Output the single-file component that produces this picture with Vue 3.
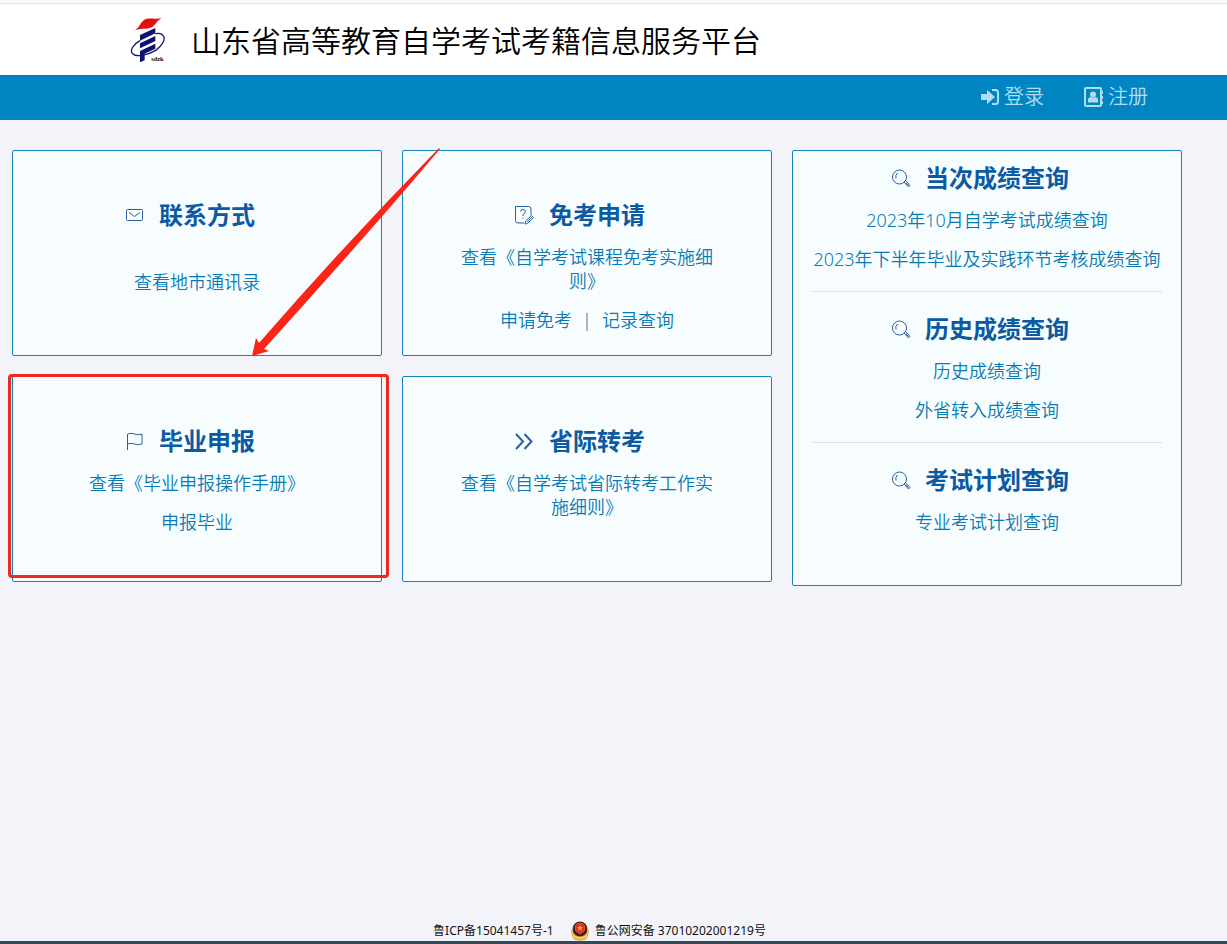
<script setup>
const cards = [
  { title: '联系方式', icon: 'mail', spaced: true, rows: [['查看地市通讯录']] },
  { title: '免考申请', icon: 'exam', rows: [['查看《自学考试课程免考实施细则》'], ['申请免考', '记录查询']] },
  { title: '毕业申报', icon: 'flag', marked: true, rows: [['查看《毕业申报操作手册》'], ['申报毕业']] },
  { title: '省际转考', icon: 'forward', rows: [['查看《自学考试省际转考工作实施细则》']] }
]
const queries = [
  { title: '当次成绩查询', links: ['2023年10月自学考试成绩查询', '2023年下半年毕业及实践环节考核成绩查询'] },
  { title: '历史成绩查询', links: ['历史成绩查询', '外省转入成绩查询'] },
  { title: '考试计划查询', links: ['专业考试计划查询'] }
]
</script>

<template>
  <div class="page">
    <header class="brand">
      <svg class="logo" viewBox="60 48 108 138" role="img" aria-label="sdzk">
        <path fill="#e01010" d="M71 90C88 82 90 66 102 57C115 48 134 57 155 50C141 59 136 72 125 79C109 87 93 80 71 90Z" />
        <g fill="#12126e">
          <path d="M90 102L136 81V97L90 119Z" />
          <path d="M90 127L136 105V120L90 142Z" />
          <path d="M90 150L136 128V143L104 158V178L90 184Z" />
        </g>
        <path fill="none" stroke="#12126e" stroke-width="4" d="M90 119C70 130 59 148 67 157C77 170 112 163 137 148C158 134 168 113 159 103C155 97 147 96 136 98" />
        <text x="124" y="181" class="logo-text">sdzk</text>
      </svg>
      <h1>山东省高等教育自学考试考籍信息服务平台</h1>
    </header>

    <nav class="nav">
      <a href="#">
        <svg class="nav-icon" viewBox="0 0 20 20">
          <path fill="currentColor" d="M1 7h6V3l8 7-8 7v-4H1z" />
          <path fill="none" stroke="currentColor" stroke-width="2" d="M12 3h3.500Q18 3 18 5.500v9Q18 17 15.500 17H12" />
        </svg>登录</a>
      <a href="#">
        <svg class="nav-icon" viewBox="0 0 20 20">
          <rect x="1" y="1" width="16" height="18" rx="1" fill="none" stroke="currentColor" stroke-width="2" />
          <path fill="currentColor" d="M17 4h2v3h-2zM17 9h2v3h-2zM17 14h2v3h-2z" />
          <circle cx="9" cy="7.500" r="3" fill="currentColor" />
          <path fill="currentColor" d="M4 15.500V13q0-3 3-3 2 1.500 4 0 3 0 3 3v2.500z" />
        </svg>注册</a>
    </nav>

    <main class="content">
      <section v-for="card in cards" :key="card.title" class="card" :class="[card.icon, { spaced: card.spaced }]">
        <h2>
          <svg class="icon" viewBox="0 0 20 20">
            <g v-if="card.icon === 'mail'">
              <rect x="1.500" y="4.500" width="16" height="11" rx="1" />
              <path d="M4 7.500l5.500 4L15 7.500" />
            </g>
            <g v-else-if="card.icon === 'exam'">
              <path d="M9 18H3Q.5 18 .5 15.500V1.500h13Q16 1.500 16 4v6" />
              <path d="M5.500 6.500Q5.500 4.500 8 4.500T10.500 6.500Q10.500 8 9 8.500 8 9 8 11M8 12.500v1" />
              <path d="M10 19l.5-3 6-5.500 2 2-6 6zM12 17l5-5" />
            </g>
            <path v-else-if="card.icon === 'flag'" d="M2.500 19V3Q6 1.500 9.500 3T17 3v10Q13 14.500 9.500 13T2.500 13" />
            <path v-else class="thick" d="M1 3l7 7.500L1 18M9.500 3l7 7.500-7 7.500" />
          </svg>
          <span>{{ card.title }}</span>
        </h2>
        <p v-for="row in card.rows" :key="row[0]">
          <template v-for="(label, i) in row" :key="label"><span v-if="i" class="divider">|</span><a href="#">{{ label }}</a></template>
        </p>
        <span v-if="card.marked" class="mark"></span>
      </section>

      <aside class="queries">
        <section v-for="query in queries" :key="query.title">
          <h2>
            <svg class="icon" viewBox="0 0 20 20">
              <circle cx="8.500" cy="9" r="7" />
              <path d="M5 10.500Q4 7 6.500 5M13 14l1.500-1.500 4.500 5-1.500 1.500zM15 15l2.500 2.500" />
            </svg>
            <span>{{ query.title }}</span>
          </h2>
          <p v-for="label in query.links" :key="label"><a href="#">{{ label }}</a></p>
        </section>
      </aside>

      <svg class="arrow" viewBox="0 0 190 210" aria-hidden="true">
        <path fill="#fc2416" d="M187 0L188 1Q124 77 12 201L17 203 0 208 4 190 7 195Q94 95 187 0Z" />
      </svg>
    </main>

    <footer class="footer">
      <a href="#">鲁ICP备15041457号-1</a>
      <a href="#">
        <svg class="badge" viewBox="0 0 20 20">
          <path fill="#e9b44a" d="M1 8Q1 17 5 19q5 1.500 10 0 4-2 4-11l-4 5H5z" />
          <circle cx="10" cy="8" r="7.500" fill="#432018" />
          <path fill="#e52d1d" stroke="#d9902f" stroke-width=".5" d="M10 2Q15 2 15 7q0 4-5 6-5-2-5-6 0-5 5-5z" />
          <path fill="#f6a744" d="M10 4l1 2h2l-1.500 1.500.5 2-2-1-2 1 .5-2L7 6h2z" />
          <path fill="none" stroke="#fae0a0" d="M3 15q7 4 14 0" />
        </svg>鲁公网安备 37010202001219号</a>
    </footer>
  </div>
</template>

<style>
body {
  margin: 0;
}
</style>

<style scoped>
.page {
  box-sizing: border-box;
  min-height: 100vh;
  display: flex;
  flex-direction: column;
  background: #f3f4f9;
  border-bottom: 3px solid #34495a;
  font-family: "Noto Sans", "Noto Sans CJK SC", sans-serif;
  font-weight: 350;
}
a {
  color: inherit;
  text-decoration: none;
}
h1,
h2,
p {
  margin: 0;
}
.brand {
  box-sizing: border-box;
  height: 75px;
  padding: 4px 20px 0 130px;
  display: flex;
  align-items: center;
  gap: 25px;
  background: linear-gradient(#fafafa 3px, #e6e6e6 3px, #e6e6e6 4px, #fff 4px);
}
.logo {
  width: 36px;
  height: 46px;
  flex: none;
}
.logo-text {
  font: bold 19px "Liberation Serif", serif;
  fill: #111;
}
.brand h1 {
  padding-top: 3px;
  font-size: 30px;
  line-height: 40px;
  font-weight: 350;
  color: #000;
}
.nav {
  box-sizing: border-box;
  height: 45px;
  padding: 0 79px 2px 20px;
  display: flex;
  align-items: center;
  justify-content: flex-end;
  gap: 40px;
  background: #0085c3;
  color: #b2dcf0;
  font-size: 20px;
  line-height: 30px;
}
.nav a {
  display: flex;
  align-items: center;
  gap: 4px;
}
.nav-icon {
  width: 20px;
  height: 20px;
}
.content {
  position: relative;
  display: grid;
  grid-template-columns: 37fr 37fr 39fr;
  grid-template-rows: auto auto 1fr;
  gap: 20px;
  padding: 30px 45px 30px 12px;
}
.card,
.queries {
  box-sizing: border-box;
  background: #f7fdff;
  border: 1px solid #1481b8;
  border-radius: 2px;
  text-align: center;
  color: #0a7bb2;
  font-size: 18px;
  line-height: 24px;
}
.card {
  position: relative;
  min-height: 206px;
  padding: 46px 50px 8px;
}
.queries {
  grid-column: 3;
  grid-row: 1 / 4;
  align-self: start;
  padding: 0 19px 31px;
}
.queries section {
  padding: 19px 0 5px;
}
.queries section:first-child {
  padding-top: 9px;
}
.queries section + section {
  border-top: 1px solid #dde4e9;
}
.queries p {
  white-space: nowrap;
}
h2 {
  display: flex;
  align-items: center;
  justify-content: center;
  gap: 14px;
  padding-right: 14px;
  margin-bottom: 12px;
  color: #0b5aa2;
  font-size: 24px;
  line-height: 36px;
  font-weight: 700;
}
p {
  margin-bottom: 15px;
}
.spaced h2 {
  margin-bottom: 37px;
}
.icon {
  width: 20px;
  height: 20px;
  fill: none;
  stroke: #285f9f;
  stroke-width: 1;
}
.thick {
  stroke-width: 2;
}
.divider {
  margin: 0 10px;
}
.mark {
  position: absolute;
  inset: -3px -8px 3px -5px;
  border: 3px solid #ee2a20;
  border-radius: 4px;
}
.arrow {
  position: absolute;
  left: 252px;
  top: 28px;
  width: 190px;
  height: 210px;
  pointer-events: none;
}
.footer {
  margin-top: auto;
  padding-right: 28px;
  display: flex;
  justify-content: center;
  gap: 16px;
  color: #111;
  font-size: 12px;
  line-height: 20px;
  font-weight: 400;
}
.footer a {
  display: flex;
  align-items: center;
  gap: 5px;
}
.badge {
  width: 20px;
  height: 20px;
}
</style>
